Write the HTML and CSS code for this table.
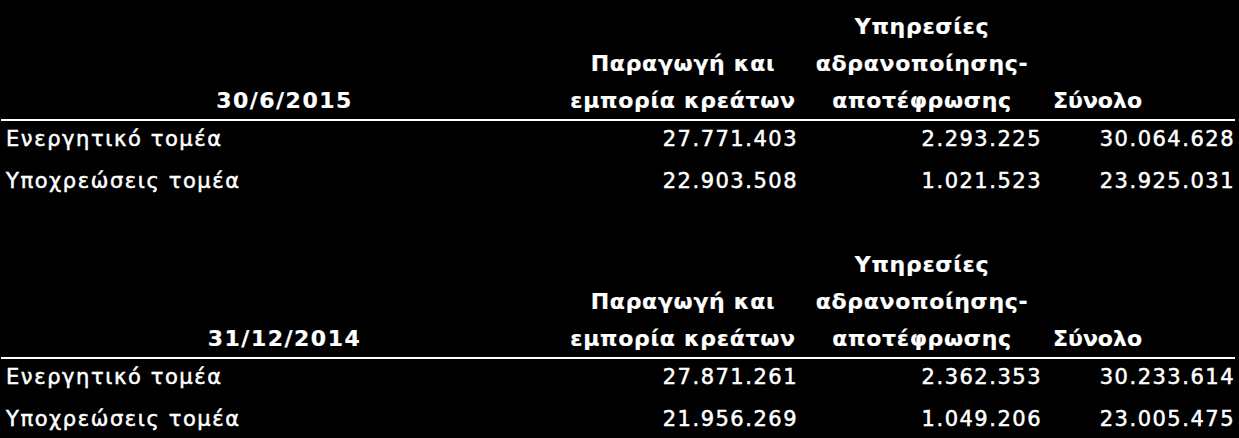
FILE: index.html
```html
<!DOCTYPE html>
<html lang="el">
<head>
<meta charset="utf-8">
<title>Τομείς</title>
<link rel="stylesheet" href="styles.css">
</head>
<body>
<table class="seg">
  <colgroup>
    <col class="c-label"><col class="c-a"><col class="c-b"><col class="c-t">
  </colgroup>
  <thead>
    <tr>
      <th class="h-date">30/6/2015</th>
      <th class="h-col">Παραγωγή και<br>εμπορία κρεάτων</th>
      <th class="h-col">Υπηρεσίες<br>αδρανοποίησης-<br>αποτέφρωσης</th>
      <th class="h-total">Σύνολο</th>
    </tr>
  </thead>
  <tbody>
    <tr>
      <td class="label">Ενεργητικό τομέα</td>
      <td class="num">27.771.403</td>
      <td class="num num-b">2.293.225</td>
      <td class="num">30.064.628</td>
    </tr>
    <tr>
      <td class="label">Υποχρεώσεις τομέα</td>
      <td class="num">22.903.508</td>
      <td class="num num-b">1.021.523</td>
      <td class="num">23.925.031</td>
    </tr>
  </tbody>
</table>

<table class="seg seg-second">
  <colgroup>
    <col class="c-label"><col class="c-a"><col class="c-b"><col class="c-t">
  </colgroup>
  <thead>
    <tr>
      <th class="h-date">31/12/2014</th>
      <th class="h-col">Παραγωγή και<br>εμπορία κρεάτων</th>
      <th class="h-col">Υπηρεσίες<br>αδρανοποίησης-<br>αποτέφρωσης</th>
      <th class="h-total">Σύνολο</th>
    </tr>
  </thead>
  <tbody>
    <tr>
      <td class="label">Ενεργητικό τομέα</td>
      <td class="num">27.871.261</td>
      <td class="num num-b">2.362.353</td>
      <td class="num">30.233.614</td>
    </tr>
    <tr>
      <td class="label">Υποχρεώσεις τομέα</td>
      <td class="num">21.956.269</td>
      <td class="num num-b">1.049.206</td>
      <td class="num">23.005.475</td>
    </tr>
  </tbody>
</table>
</body>
</html>
```

FILE: styles.css
```css
html, body {
  margin: 0;
  padding: 0;
  background: #000;
  color: #fff;
}

body {
  font-family: "DejaVu Sans", "Liberation Sans", sans-serif;
}

.seg {
  border-collapse: collapse;
  table-layout: fixed;
  width: 1234px;
  margin-left: 1px;
}

.seg-second {
  margin-top: 33px;
}

.c-label { width: 567px; }
.c-a { width: 230px; }
.c-b { width: 248px; }
.c-t { width: 189px; }

th {
  font-weight: bold;
  font-size: 22px;
  letter-spacing: 0.7px;
  line-height: 37px;
  height: 119px;
  padding: 0;
  vertical-align: bottom;
  border-bottom: 2px solid #fff;
  white-space: nowrap;
  -webkit-text-stroke: 0.2px #fff;
}

.h-date {
  text-align: center;
  letter-spacing: 1.5px;
}

.h-col { text-align: center; }

.h-total {
  text-align: left;
  padding-left: 7px;
  letter-spacing: 0;
}

td {
  height: 42px;
  padding: 0;
  vertical-align: top;
  line-height: 36px;
  white-space: nowrap;
  -webkit-text-stroke: 0.5px #fff;
}

.label {
  font-size: 21px;
  letter-spacing: 1.6px;
  padding-left: 5px;
}

.num {
  font-size: 21px;
  text-align: right;
  padding-right: 0;
  letter-spacing: 1.5px;
}

.num-b { padding-right: 4px; }
```
